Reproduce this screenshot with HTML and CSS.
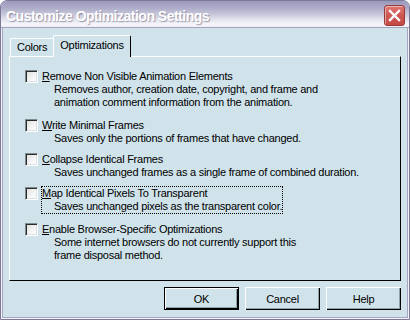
FILE: index.html
```html
<!DOCTYPE html>
<html>
<head>
<meta charset="utf-8">
<link rel="stylesheet" href="styles.css">
</head>
<body>
<div class="window">
  <div class="titlebar">
    <span class="title">Customize Optimization Settings</span>
    <div class="close">
      <svg width="21" height="21" viewBox="0 0 21 21">
        <path d="M6 6 L15 15 M15 6 L6 15" stroke="#fff" stroke-width="2.4" stroke-linecap="square" fill="none"/>
      </svg>
    </div>
  </div>
  <div class="frame">
    <div class="frame2">
      <div class="client">
        <div class="tabs">
          <div class="tab">Colors</div>
          <div class="tab tab-active">Optimizations</div>
        </div>
        <div class="panel">
          <div class="opt opt1">
            <span class="cb"></span>
            <div class="lbl">
              <div class="line"><u>R</u>emove Non Visible Animation Elements</div>
              <div class="line desc">Removes author, creation date, copyright, and frame and</div>
              <div class="line desc">animation comment information from the animation.</div>
            </div>
          </div>
          <div class="opt opt2">
            <span class="cb"></span>
            <div class="lbl">
              <div class="line"><u>W</u>rite Minimal Frames</div>
              <div class="line desc">Saves only the portions of frames that have changed.</div>
            </div>
          </div>
          <div class="opt opt3">
            <span class="cb"></span>
            <div class="lbl">
              <div class="line"><u>C</u>ollapse Identical Frames</div>
              <div class="line desc">Saves unchanged frames as a single frame of combined duration.</div>
            </div>
          </div>
          <div class="opt opt4">
            <span class="cb"></span>
            <div class="lbl lbl-focus">
              <div class="line"><u>M</u>ap Identical Pixels To Transparent</div>
              <div class="line desc">Saves unchanged pixels as the transparent color.</div>
            </div>
          </div>
          <div class="opt opt5">
            <span class="cb"></span>
            <div class="lbl">
              <div class="line"><u>E</u>nable Browser-Specific Optimizations</div>
              <div class="line desc">Some internet browsers do not currently support this</div>
              <div class="line desc">frame disposal method.</div>
            </div>
          </div>
        </div>
        <div class="buttons">
          <button class="btn btn-default">OK</button>
          <button class="btn">Cancel</button>
          <button class="btn">Help</button>
        </div>
      </div>
    </div>
  </div>
</div>
</body>
</html>
```
FILE: styles.css
```css
html, body {
  margin: 0;
  padding: 0;
  background: #ffffff;
}

.window {
  width: 410px;
  height: 320px;
  box-sizing: border-box;
  border: 1px solid #7b7b99;
  border-radius: 7px 7px 0 0;
  overflow: hidden;
  display: flex;
  flex-direction: column;
  background: #d0e3eb;
  font-family: "Liberation Sans", Arial, sans-serif;
  font-size: 11px;
  letter-spacing: -0.25px;
  color: #000;
}

.titlebar {
  height: 26px;
  flex: none;
  display: flex;
  align-items: flex-start;
  padding-left: 5px;
  border-bottom: 1px solid #a4a4bc;
  background: linear-gradient(to bottom, #9c9abc 0%, #acaac8 25%, #c6c6da 50%, #e4e4ef 72%, #f6f6fa 90%, #eeeef4 100%);
}

.title {
  margin-top: 7px;
  font-size: 14px;
  line-height: 16px;
  font-weight: bold;
  letter-spacing: -0.5px;
  color: #ffffff;
  text-shadow: 1px 1px 1px rgba(90, 88, 120, 0.55);
  white-space: nowrap;
}

.close {
  margin-left: auto;
  margin-right: 4px;
  margin-top: 4px;
  width: 21px;
  height: 21px;
  box-sizing: border-box;
  border: 1px solid #9a3a38;
  border-radius: 3px;
  background: linear-gradient(to bottom, #e07872 0%, #cf5a55 45%, #c44a46 100%);
  box-shadow: inset 1px 1px 0 rgba(255, 255, 255, 0.45);
  display: flex;
}

.close svg {
  margin: -1px;
}

.frame {
  flex: 1;
  display: flex;
  border-style: solid;
  border-color: #f4f4f8;
  border-width: 0 1px 1px 1px;
}

.frame2 {
  flex: 1;
  display: flex;
  border-style: solid;
  border-color: #a6a6c0;
  border-width: 0 1px 1px 1px;
}

.client {
  flex: 1;
  display: flex;
  flex-direction: column;
  padding: 7px 6px 0 6px;
}

.tabs {
  height: 21px;
  display: flex;
  align-items: flex-end;
  padding-left: 1px;
}

.tab {
  height: 18px;
  box-sizing: border-box;
  padding: 0 6px;
  border: 1px solid;
  border-bottom: none;
  border-color: #ffffff #a9bcc4 transparent #ffffff;
  border-radius: 2px 2px 0 0;
  line-height: 17px;
  white-space: nowrap;
}

.tab-active {
  height: 22px;
  margin-bottom: -1px;
  margin-left: -1px;
  position: relative;
  z-index: 1;
  background: #d0e3eb;
  border-right-color: #000000;
  line-height: 19px;
}

.panel {
  height: 225px;
  box-sizing: border-box;
  border: 1px solid;
  border-color: #ffffff #000000 #000000 #ffffff;
  padding: 12px 0 0 15px;
}

.opt {
  display: flex;
  align-items: flex-start;
}

.opt2 { margin-top: 8px; }
.opt3 { margin-top: 6px; }
.opt4 { margin-top: 6px; }
.opt5 { margin-top: 8px; }

.cb {
  flex: none;
  width: 13px;
  height: 13px;
  box-sizing: border-box;
  margin-top: 1px;
  border: 1px solid;
  border-color: #7e8a90 #ffffff #ffffff #7e8a90;
  box-shadow: inset 1px 1px 0 #2c2c2c, inset -1px -1px 0 #d8e2e6;
  background: linear-gradient(135deg, #dcdcdc 0%, #f6f6f6 60%, #ffffff 100%);
}

.lbl {
  margin-left: 3px;
  border: 1px solid transparent;
}

.lbl-focus {
  border: 1px dotted #000000;
}

.line {
  height: 13px;
  line-height: 13px;
  white-space: nowrap;
}

.desc {
  padding-left: 12px;
}

.line u {
  text-decoration-thickness: 1px;
  text-underline-offset: 1px;
}

.buttons {
  display: flex;
  justify-content: flex-end;
  gap: 6px;
  margin-top: 6px;
}

.btn {
  width: 75px;
  height: 23px;
  padding: 0;
  margin: 0;
  border: 0;
  background: #d0e3eb;
  font-family: "Liberation Sans", Arial, sans-serif;
  font-size: 11px;
  letter-spacing: -0.25px;
  color: #000;
  box-shadow: inset 1px 1px 0 #ffffff, inset -1px -1px 0 #000000, inset -2px -2px 0 #8ea4ac;
}

.btn-default {
  box-shadow: inset 0 0 0 1px #000000, inset 2px 2px 0 #ffffff, inset -2px -2px 0 #000000, inset -3px -3px 0 #8ea4ac;
}
```
